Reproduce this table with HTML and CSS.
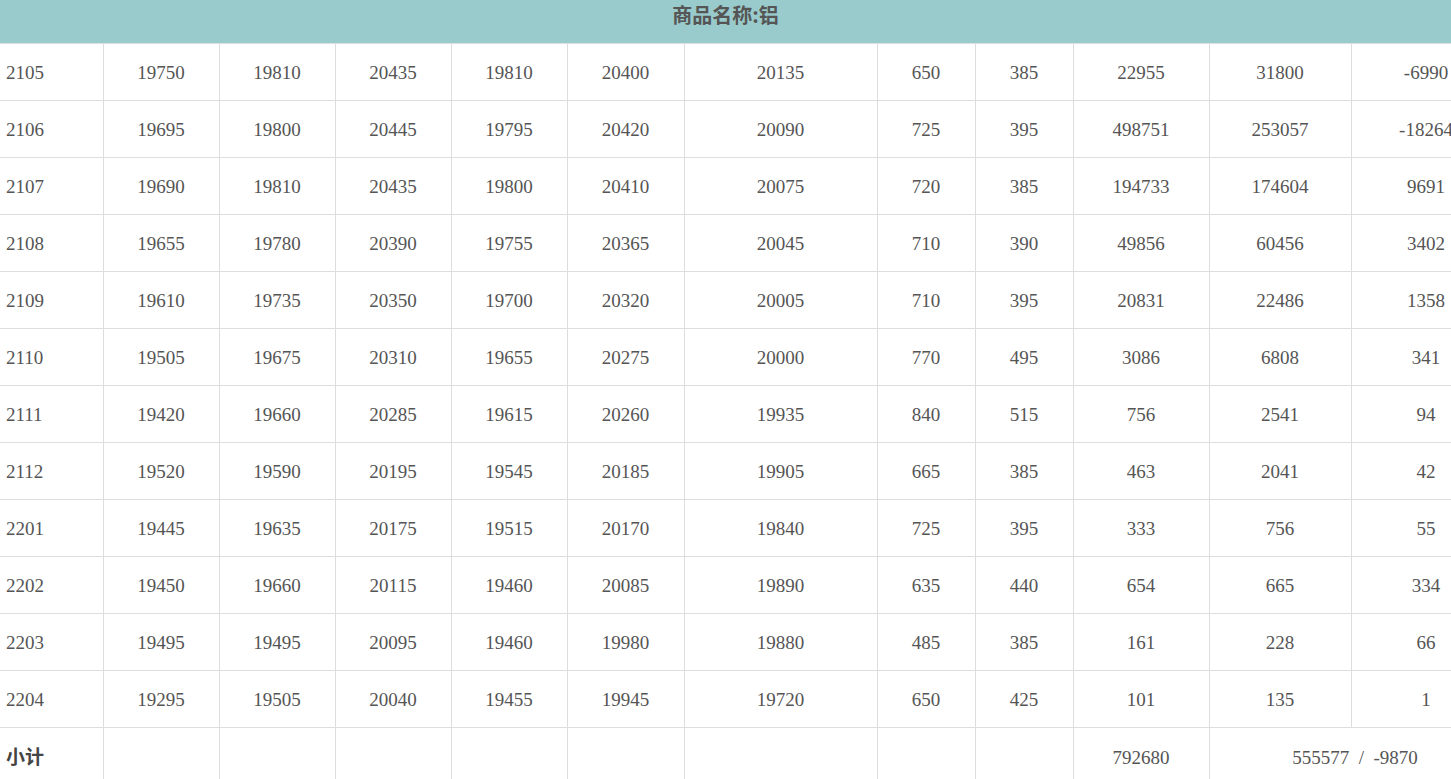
FILE: index.html
```html
<!DOCTYPE html>
<html lang="zh-CN">
<head>
<meta charset="utf-8">
<title>商品名称:铝</title>
<link rel="stylesheet" href="styles.css">
</head>
<body>
<div class="page">
  <div class="title">商品名称:铝</div>
  <table class="grid">
    <colgroup>
      <col class="c-code"><col class="c116"><col class="c116"><col class="c116"><col class="c116"><col class="c117"><col class="c193"><col class="c98"><col class="c98"><col class="c136"><col class="c142"><col class="c150">
    </colgroup>
    <tbody>
      <tr><td>2105</td><td>19750</td><td>19810</td><td>20435</td><td>19810</td><td>20400</td><td>20135</td><td>650</td><td>385</td><td>22955</td><td>31800</td><td>-6990</td></tr>
      <tr><td>2106</td><td>19695</td><td>19800</td><td>20445</td><td>19795</td><td>20420</td><td>20090</td><td>725</td><td>395</td><td>498751</td><td>253057</td><td>-18264</td></tr>
      <tr><td>2107</td><td>19690</td><td>19810</td><td>20435</td><td>19800</td><td>20410</td><td>20075</td><td>720</td><td>385</td><td>194733</td><td>174604</td><td>9691</td></tr>
      <tr><td>2108</td><td>19655</td><td>19780</td><td>20390</td><td>19755</td><td>20365</td><td>20045</td><td>710</td><td>390</td><td>49856</td><td>60456</td><td>3402</td></tr>
      <tr><td>2109</td><td>19610</td><td>19735</td><td>20350</td><td>19700</td><td>20320</td><td>20005</td><td>710</td><td>395</td><td>20831</td><td>22486</td><td>1358</td></tr>
      <tr><td>2110</td><td>19505</td><td>19675</td><td>20310</td><td>19655</td><td>20275</td><td>20000</td><td>770</td><td>495</td><td>3086</td><td>6808</td><td>341</td></tr>
      <tr><td>2111</td><td>19420</td><td>19660</td><td>20285</td><td>19615</td><td>20260</td><td>19935</td><td>840</td><td>515</td><td>756</td><td>2541</td><td>94</td></tr>
      <tr><td>2112</td><td>19520</td><td>19590</td><td>20195</td><td>19545</td><td>20185</td><td>19905</td><td>665</td><td>385</td><td>463</td><td>2041</td><td>42</td></tr>
      <tr><td>2201</td><td>19445</td><td>19635</td><td>20175</td><td>19515</td><td>20170</td><td>19840</td><td>725</td><td>395</td><td>333</td><td>756</td><td>55</td></tr>
      <tr><td>2202</td><td>19450</td><td>19660</td><td>20115</td><td>19460</td><td>20085</td><td>19890</td><td>635</td><td>440</td><td>654</td><td>665</td><td>334</td></tr>
      <tr><td>2203</td><td>19495</td><td>19495</td><td>20095</td><td>19460</td><td>19980</td><td>19880</td><td>485</td><td>385</td><td>161</td><td>228</td><td>66</td></tr>
      <tr><td>2204</td><td>19295</td><td>19505</td><td>20040</td><td>19455</td><td>19945</td><td>19720</td><td>650</td><td>425</td><td>101</td><td>135</td><td>1</td></tr>
      <tr class="total"><td class="total-label">小计</td><td></td><td></td><td></td><td></td><td></td><td></td><td></td><td></td><td>792680</td><td colspan="2">555577&ensp;/&ensp;-9870</td></tr>
    </tbody>
  </table>
</div>
</body>
</html>
```

FILE: styles.css
```css
html, body {
  margin: 0;
  padding: 0;
  background: #ffffff;
  overflow: hidden;
}

.page {
  width: 1451px;
  height: 779px;
  overflow: hidden;
}

.title {
  height: 44px;
  box-sizing: border-box;
  padding-top: 1px;
  background: #9acbcc;
  color: #555555;
  text-align: center;
  font-family: "Noto Sans CJK SC", "Noto Sans", sans-serif;
  font-weight: bold;
  font-size: 20px;
  line-height: 28px;
  border-bottom: 1px solid #e0e0e0;
}

.grid {
  border-collapse: collapse;
  table-layout: fixed;
  width: 1501px;
  font-family: "Liberation Serif", "Noto Sans CJK SC", serif;
  font-size: 19px;
  color: #555555;
}

.c-code { width: 103px; }
.c116 { width: 116px; }
.c117 { width: 117px; }
.c193 { width: 193px; }
.c98 { width: 98px; }
.c136 { width: 136px; }
.c142 { width: 142px; }
.c150 { width: 150px; }

.grid td {
  height: 54px;
  padding: 2px 0 0 0;
  text-align: center;
  vertical-align: middle;
  border-right: 1px solid #dddddd;
  border-bottom: 1px solid #dddddd;
  white-space: nowrap;
}

.grid td:first-child {
  text-align: left;
  padding-left: 6px;
}

.grid .total-label {
  padding-top: 0;
  padding-bottom: 4px;
  font-family: "Noto Sans CJK SC", sans-serif;
  font-weight: bold;
  color: #444444;
}
```
